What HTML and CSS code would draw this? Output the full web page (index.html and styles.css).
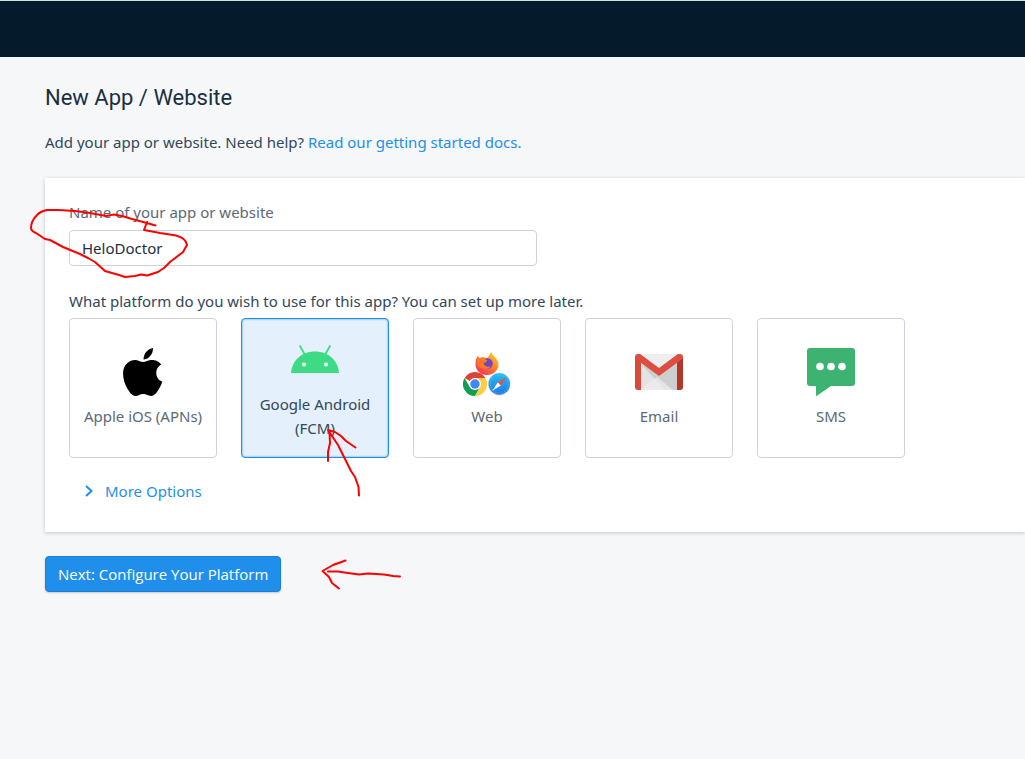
FILE: index.html
```html
<!DOCTYPE html>
<html lang="en">
<head>
<meta charset="utf-8">
<title>New App / Website</title>
<link rel="stylesheet" href="styles.css">
</head>
<body>
<header class="topbar"></header>
<main class="page">
  <h1 class="title">New App / Website</h1>
  <p class="intro">Add your app or website. Need help? <a href="#docs">Read our getting started docs.</a></p>
  <form class="form">
    <section class="card">
      <label class="label" for="app-name">Name of your app or website</label>
      <input class="text-input" id="app-name" type="text" value="HeloDoctor">
      <p class="question" id="platform-question">What platform do you wish to use for this app? You can set up more later.</p>
      <div class="platforms" role="group" aria-labelledby="platform-question">
        <button class="platform" type="button">
          <svg class="icon" viewBox="0 0 48 48" aria-hidden="true"><path transform="translate(2.500 0) scale(.96 1)" d="M32.8 0C32.9 3 31.8 5.9 29.8 8.1C27.9 10.3 25.7 11.6 23 11.4C22.9 8.4 24.2 5.500 26.1 3.500C27.9 1.500 30.500.3 32.8 0ZM41.3 16.4C38 18.4 36.2 21 36.2 24.7C36.2 29 38.6 32.2 42.500 33.7C41.8 36.1 40.6 38.500 39 41C36.8 44.4 34.500 47.9 31 47.9C27.500 48 26.500 46 22.7 46C18.9 46 17.7 47.9 14.6 48C11.2 48.1 8.6 44.4 6.4 41C1.9 34-1.500 21.500 6.1 15.1C8.4 13.1 11.3 12 13.9 12C17.2 12 20 14 22.500 14C25 14 28.3 11.6 32.4 12C34.1 12.1 38.7 12.7 41.3 16.4Z" fill="#000"/></svg>
          <span>Apple iOS (APNs)</span>
        </button>
        <button class="platform selected" type="button" aria-pressed="true">
          <svg class="icon" viewBox="0 0 48 48" aria-hidden="true"><path d="M9 10L14 19M39 10L34 19" stroke="#3ddc84" stroke-width="1.8" stroke-linecap="round"/><path d="M0 37C1 24 11 15.500 24 15.500S47 24 48 37Z" fill="#3ddc84"/><circle cx="13" cy="28.500" r="2" fill="#fff"/><circle cx="35" cy="28.500" r="2" fill="#fff"/></svg>
          <span>Google Android (FCM)</span>
        </button>
        <button class="platform" type="button">
          <svg class="icon" viewBox="0 0 48 48" aria-hidden="true">
            <defs>
              <linearGradient id="fox" x1="1" y1="0" x2=".2" y2="1"><stop offset="0" stop-color="#ffe13b"/><stop offset=".45" stop-color="#ff8a25"/><stop offset="1" stop-color="#f52b63"/></linearGradient>
              <linearGradient id="safari" x1="0" y1="0" x2="0" y2="1"><stop offset="0" stop-color="#24bdf2"/><stop offset="1" stop-color="#2078e4"/></linearGradient>
            </defs>
            <path d="M14.500 8L16.500 10L20 9L24 10L26 8Q26.500 5 28.500 4Q29 7 32 9L33.500 11Q36 14 35.500 17C35 23 30 27 24 27C17 27 12.500 22 12.500 16Q12.500 11 14.500 8Z" fill="url(#fox)"/>
            <circle cx="24.500" cy="15.500" r="5.200" fill="#6d45c8"/>
            <path d="M15 10L20 10L24.500 12.500Q23 14.500 20.500 15C21 18.500 25 19.500 28 18C25 23 16 21 14 16Z" fill="#ff7a22"/>
            <path d="M12 36L1.600 30A12 12 0 0 1 22.400 30H12Z" fill="#db4437"/>
            <path d="M1.600 30A12 12 0 0 0 12 48L17.200 39L12 36L6.800 39Z" fill="#0f9d58"/>
            <path d="M22.400 30A12 12 0 0 1 12 48L17.200 39L12 30Z" fill="#ffcd40"/>
            <circle cx="12" cy="36" r="6" fill="#fff"/><circle cx="12" cy="36" r="4.700" fill="#4285f4"/>
            <circle cx="36.300" cy="36" r="11.500" fill="#d9dde0"/><circle cx="36.300" cy="36" r="10.700" fill="url(#safari)"/>
            <circle cx="36.300" cy="36" r="9" fill="none" stroke="#9eddf8" stroke-width="1" stroke-dasharray=".5 1.500"/>
            <path d="M43.500 29L37.800 37.500L34.800 34.500Z" fill="#f24b3e"/><path d="M29 43L34.800 34.500L37.800 37.500Z" fill="#fff"/>
          </svg>
          <span>Web</span>
        </button>
        <button class="platform" type="button">
          <svg class="icon" viewBox="0 0 48 48" aria-hidden="true"><path d="M3 6H45V42H3Z" fill="#e3e3e3"/><path d="M5 15L30 42H43V15L24 27Z" fill="#cecece"/><path d="M4 42L22 29L38 42Z" fill="#f0f0f0" opacity=".65"/><path d="M6 6L24 20L42 6Z" fill="#eee"/><path d="M0 9L6 13V42H3Q0 42 0 39Z" fill="#d54c3f"/><path d="M42 13L48 9V39Q48 42 45 42H42Z" fill="#b63529"/><path d="M0 9Q0 6 3 6H5L24 20L43 6H45Q48 6 48 9Q48 11 46 12L24 28L2 12Q0 11 0 9Z" fill="#dc4e41"/></svg>
          <span>Email</span>
        </button>
        <button class="platform" type="button">
          <svg class="icon" viewBox="0 0 48 48" aria-hidden="true"><path d="M3 0H45Q48 0 48 3V35Q48 38 45 38H24L11 47Q9 49 9 47V38H3Q0 38 0 35V3Q0 0 3 0Z" fill="#3cb371"/><g fill="#fff"><circle cx="13" cy="18.500" r="3.800"/><circle cx="24" cy="18.500" r="3.800"/><circle cx="35" cy="18.500" r="3.800"/></g></svg>
          <span>SMS</span>
        </button>
      </div>
      <button class="more" type="button">
        <svg class="chevron" viewBox="0 0 8 12" aria-hidden="true"><path d="M1 1L6.500 6L1 11" fill="none" stroke="currentColor" stroke-width="2"/></svg>
        <span>More Options</span>
      </button>
    </section>
    <button class="next" type="submit">Next: Configure Your Platform</button>
  </form>
</main>
<svg class="markup" width="420" height="600" viewBox="0 0 420 600" aria-hidden="true">
  <path d="M155.500 225.500L145 222.500L132 219L122 216L114 214.500L106 216L90 213L75 211L58 210L47 210Q41 211 37 215Q31 221 31 228Q31 231 36 233L45 239L50 240L63 247L80 254L88 258L95 262L105 271L119 275L125 277L135 276L141 274.500L147 275.500L158 272L164 268L170 262L183 252L187 245Q186 238 176 235.500L160 233L144 230L147 222"/>
  <path d="M359 495.500L358.500 487L355 477L351 471L344 457L338 445L330 433L328 430L335 432L341 436L346 441L355.500 447.500M329.500 432L330 443L328 452L328 461"/>
  <path d="M400 576.500L393 576L384 574.500L368 573.500L359 574.500L348 573L338 571.500L328 571.500M345.500 560.500L333 565L322.500 571L329 577L332 583L339 588.500"/>
</svg>
</body>
</html>
```
FILE: styles.css
```css
* {
  box-sizing: border-box;
}

body {
  margin: 0;
  min-height: 100vh;
  background: #f5f7f9;
  color: #32475a;
  font-family: "Noto Sans", "Open Sans", sans-serif;
  font-size: 15px;
  line-height: 24px;
}

button,
input {
  font: inherit;
  color: inherit;
}

.topbar {
  height: 57px;
  border-top: 1px solid #d5dcdc;
  background: #051b2c;
}

.page {
  padding: 25px 0 24px 45px;
}

.title {
  margin: 0 0 16px;
  color: #1b2f3f;
  font: 400 22px/32px Roboto, sans-serif;
}

.intro {
  margin: 0 0 24px;
}

.intro a {
  color: #1f8feb;
  text-decoration: none;
}

.card {
  margin-bottom: 24px;
  padding: 22px 24px 23px;
  background: #fff;
  box-shadow: 0 1px 4px rgba(5, 27, 44, 0.2);
}

.label {
  display: block;
  margin-bottom: 6px;
  color: #5b6976;
}

.text-input {
  display: block;
  width: 100%;
  max-width: 468px;
  height: 36px;
  padding: 0 12px;
  border: 1px solid #ced3db;
  border-radius: 4px;
  background: #fff;
  color: #1b2f3f;
}

.question {
  margin: 23px 0 5px;
}

.platforms {
  display: flex;
  flex-wrap: wrap;
  gap: 24px;
}

.platform {
  display: flex;
  flex-direction: column;
  align-items: center;
  justify-content: center;
  gap: 8px;
  width: 148px;
  height: 140px;
  padding: 8px;
  border: 1px solid #ced3db;
  border-radius: 4px;
  background: #fff;
  color: #5b6976;
}

.platform.selected {
  border-color: #1f8feb;
  background: #e4f0fb;
  box-shadow: inset 0 0 2px #1f8feb;
  color: #32475a;
}

.icon {
  flex: none;
  width: 48px;
  height: 48px;
}

.more {
  display: flex;
  align-items: center;
  gap: 12px;
  margin-top: 15px;
  padding: 6px 16px;
  border: 0;
  background: none;
  color: #1f8feb;
}

.chevron {
  width: 8px;
  height: 12px;
}

.next {
  height: 36px;
  padding: 0 12px;
  border: 1px solid #1b80d4;
  border-radius: 4px;
  background: #1f8feb;
  box-shadow: 0 1px 2px rgba(5, 27, 44, 0.2);
  color: #fff;
  font-family: "Open Sans", sans-serif;
  font-weight: 500;
}

.markup {
  position: absolute;
  top: 0;
  left: 0;
  fill: none;
  stroke: #f00;
  stroke-width: 2;
  stroke-linecap: round;
  stroke-linejoin: round;
  pointer-events: none;
}
```
